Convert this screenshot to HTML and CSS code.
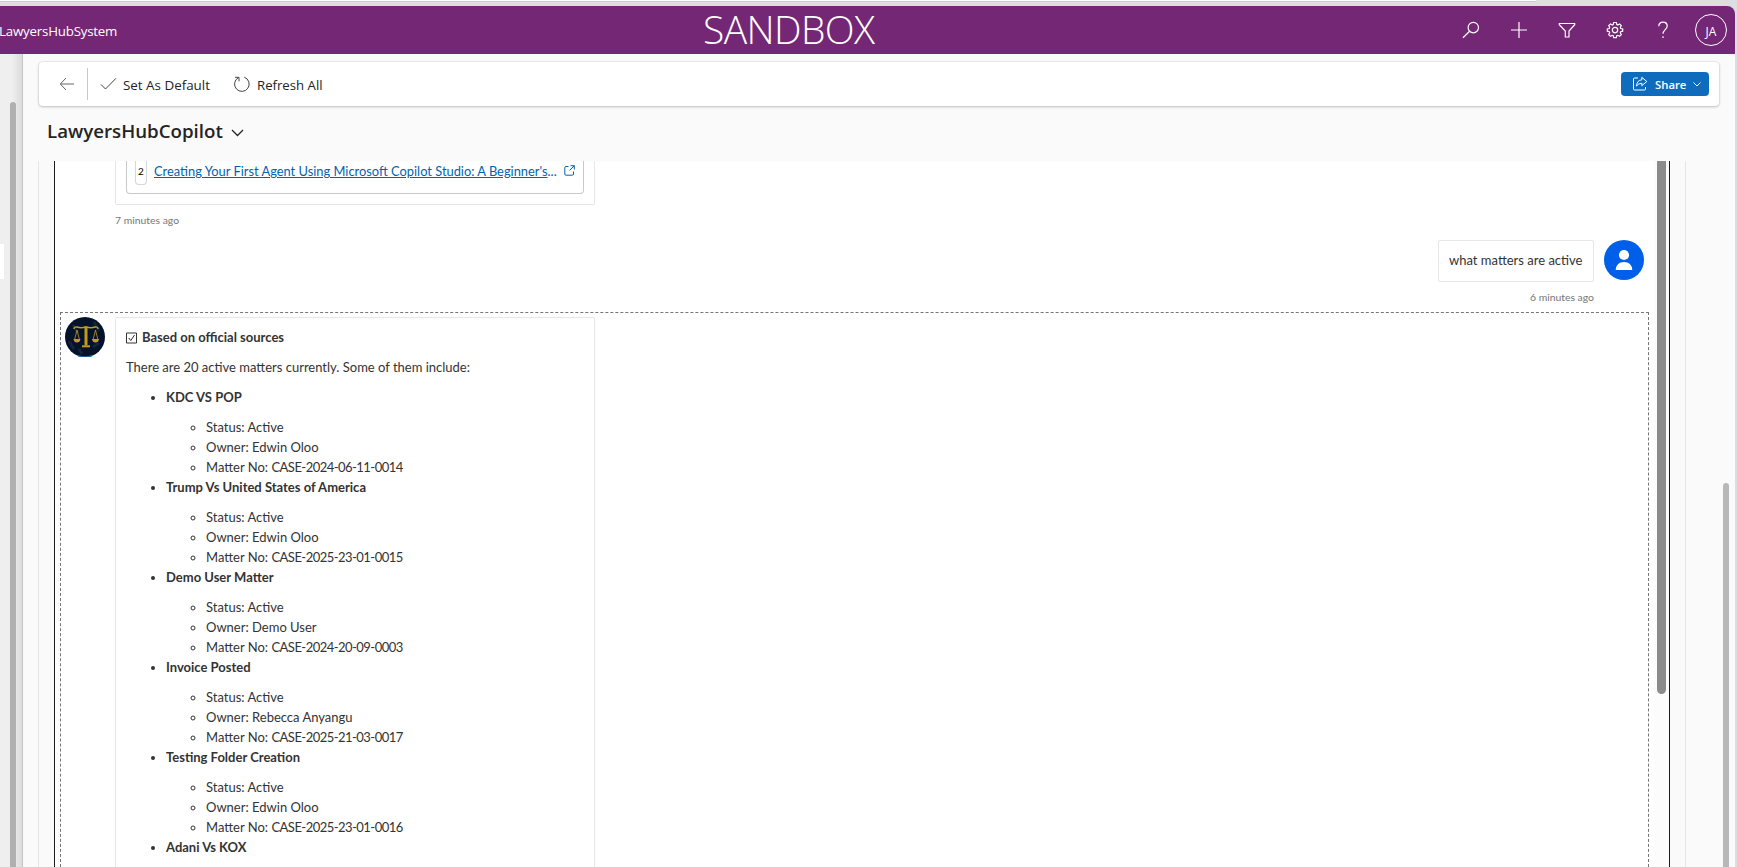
FILE: index.html
```html
<!DOCTYPE html>
<html lang="en">
<head>
<meta charset="utf-8">
<title>LawyersHubCopilot</title>
<link rel="stylesheet" href="styles.css">
</head>
<body>
<div class="window-edge"><div class="tab-edge"></div></div>
<header class="topbar">
  <span class="app-name">LawyersHubSystem</span>
  <span class="env-name">SANDBOX</span>
  <nav class="top-icons">
    <svg width="20" height="20" viewBox="0 0 20 20"><circle cx="12.3" cy="7.6" r="5.200"/><path d="M8.600 11.300 2 17.800"/></svg>
    <svg width="20" height="20" viewBox="0 0 20 20"><path d="M10 2v16M2 10h16"/></svg>
    <svg width="20" height="20" viewBox="0 0 20 20"><path d="M2.300 3.500h15.400v1.200L12 11v6H8.300v-6L2.300 4.700z"/></svg>
    <svg width="20" height="20" viewBox="0 0 20 20"><path d="M8.700 2.500h2.600l.5 2 1 .5 1.800-1.100 1.700 1.700-1 1.900.4 1 2 .5v2.200l-2 .5-.4 1 1 1.900-1.700 1.700-1.800-1-1 .4-.5 2H8.700l-.5-2-1-.4-1.800 1-1.700-1.700 1-1.900-.4-1-2-.5V9l2-.5.4-1-1-1.900 1.700-1.700L7.200 5l1-.5z"/><circle cx="10" cy="10.100" r="2.700"/></svg>
    <svg width="20" height="20" viewBox="0 0 20 20"><path d="M5.800 6.200c0-2.400 1.700-4 4.200-4s4.200 1.500 4.200 3.800c0 3.400-4.200 3.900-4.200 7.800M10 16.300v1.700"/></svg>
    <span class="persona">JA</span>
  </nav>
</header>
<div class="body">
  <aside class="side"><div class="side-thumb"></div><div class="side-item"></div></aside>
  <main class="main">
    <div class="cmdbar">
      <svg class="back" width="16" height="14" viewBox="0 0 16 14"><path d="M15 7H1.500M7 1 1.300 7 7 13"/></svg>
      <i class="divider"></i>
      <svg class="check" width="18" height="14" viewBox="0 0 18 14"><path d="M1 7.500 5.500 12 16 1.300"/></svg>
      <span class="cmd cmd-default">Set As Default</span>
      <svg class="refresh" width="18" height="18" viewBox="0 0 18 18"><path d="M11.300 2.200a7.300 7.300 0 1 1-5.800.4M2 2.300h4v4"/></svg>
      <span class="cmd cmd-refresh">Refresh All</span>
      <button class="share">
        <svg width="16" height="16" viewBox="0 0 16 16"><path d="M6 2H2.500Q1.500 2 1.500 3v10q0 1 1 1h10q1 0 1-1v-2M9.800 1.300l5 4.200-5 4.200V7.300Q6.500 7.200 4.500 10 5 4.200 9.800 3.800z"/></svg>
        <span>Share</span>
        <svg class="share-chev" width="8" height="5" viewBox="0 0 8 5"><path d="M.5.5 4 4 7.500.5"/></svg>
      </button>
    </div>
    <div class="title-row">
      <h1>LawyersHubCopilot</h1>
      <svg width="13" height="8" viewBox="0 0 13 8"><path d="M1 1l5.500 5.500L12 1"/></svg>
    </div>
    <div class="panel">
      <div class="chat">
        <div class="cite-bubble">
          <div class="cite">
            <span class="cite-num">2</span>
            <a class="cite-link"><u>Creating Your First Agent Using Microsoft Copilot Studio: A Beginner's</u>...</a>
            <svg width="11" height="11" viewBox="0 0 11 11"><path d="M4.500 1.500H2Q.8 1.500.8 2.700V9q0 1.200 1.200 1.200h6.300q1.200 0 1.200-1.200V6.500M6.500.7h3.800v3.800M10.300.7 5.500 5.500"/></svg>
          </div>
        </div>
        <div class="time time-bot">7 minutes ago</div>
        <div class="user-row">
          <div class="user-bubble">what matters are active</div>
          <svg class="user-avatar" width="40" height="40" viewBox="0 0 40 40"><circle cx="20" cy="20" r="20" fill="#005fe9"/><circle cx="20" cy="15" r="5.100" fill="#fff"/><path d="M11.700 30q.6-8 8.300-8t8.300 8z" fill="#fff"/></svg>
        </div>
        <div class="time time-user">6 minutes ago</div>
        <section class="answer">
          <svg class="bot-avatar" width="40" height="40" viewBox="0 0 40 40">
            <circle cx="20" cy="20" r="20" fill="#04122a"/>
            <path d="M13 38.600a20 20 0 0 0 14 0" fill="none" stroke="#1b62a8" stroke-width="1.500"/>
            <path d="M8 8l5 8M29 5l5 9M4 24l5 8M28 30l6-4M14 32l3 5" stroke="#13243d" stroke-width="3"/>
            <g fill="none" stroke="#c39a1c">
              <path d="M9 12q0-2.500 3-2 4 1.500 8.500 0h1q4.500 1.500 8.500 0 3-.5 3 2" stroke-width="1.500"/>
              <path d="M21 9.500v19" stroke-width="3"/>
              <path d="M17 29.300h8" stroke-width="2"/>
              <path d="M12 13 9.500 23M12 13l2.500 10M30.500 13 28 23M30.500 13 33 23" stroke-width=".8"/>
            </g>
            <path d="M8.500 22h7q-.5 3.500-3.500 3.500T8.500 22zM27 22h7q-.5 3.500-3.500 3.500T27 22z" fill="#c39a1c"/>
          </svg>
          <div class="answer-bubble">
            <p class="official"><svg width="11" height="12" viewBox="0 0 11 12"><path d="M.5 1h10v10H.5zM2.800 6l2 2.600L8.500 3"/></svg><b>Based on official sources</b></p>
            <p>There are 20 active matters currently. Some of them include:</p>
            <ul>
              <li><b>KDC VS POP</b><ul><li>Status: Active</li><li>Owner: Edwin Oloo</li><li>Matter No: <span class="no">CASE-2024-06-11-0014</span></li></ul></li>
              <li><b>Trump Vs United States of America</b><ul><li>Status: Active</li><li>Owner: Edwin Oloo</li><li>Matter No: <span class="no">CASE-2025-23-01-0015</span></li></ul></li>
              <li><b>Demo User Matter</b><ul><li>Status: Active</li><li>Owner: Demo User</li><li>Matter No: <span class="no">CASE-2024-20-09-0003</span></li></ul></li>
              <li><b>Invoice Posted</b><ul><li>Status: Active</li><li>Owner: Rebecca Anyangu</li><li>Matter No: <span class="no">CASE-2025-21-03-0017</span></li></ul></li>
              <li><b>Testing Folder Creation</b><ul><li>Status: Active</li><li>Owner: Edwin Oloo</li><li>Matter No: <span class="no">CASE-2025-23-01-0016</span></li></ul></li>
              <li><b>Adani Vs KOX</b></li>
            </ul>
          </div>
        </section>
      </div>
      <div class="chat-track"><div class="chat-thumb"></div></div>
    </div>
  </main>
  <div class="page-track"><div class="page-thumb"></div></div>
</div>
</body>
</html>
```
FILE: styles.css
```css
* { box-sizing: border-box; }
body {
  margin: 0; width: 1737px; height: 867px; overflow: hidden;
  display: flex; flex-direction: column; background: #dcdee2;
  font-family: "Open Sans", "Noto Sans", sans-serif; color: #242424;
}
svg { flex: none; fill: none; }
.window-edge { height: 6px; flex: none; background: #dcdee1; }
.tab-edge { width: 1537px; height: 2px; background: #fdfdfd; border-bottom: 1px solid #c9cfca; border-radius: 0 0 4px 0; }
.topbar {
  width: 1735px; height: 48px; flex: none; background: #742774; color: #fff;
  border-top-right-radius: 8px; display: flex; align-items: center;
}
.app-name { width: 118px; font-size: 13.3px; margin-left: -1px; padding-top: 2px; letter-spacing: -.2px; white-space: nowrap; }
.env-name { margin-left: 586px; font-size: 39px; font-weight: 300; line-height: 46px; padding-bottom: 2px; letter-spacing: -.6px; }
.top-icons { margin-left: auto; display: flex; align-items: center; gap: 28px; padding-right: 8px; }
.top-icons svg { stroke: #fff; stroke-width: 1.2; }
.persona {
  width: 32px; height: 32px; margin-left: -6px; border: 1px solid #fff; border-radius: 50%;
  font-size: 12px; font-weight: 500; line-height: 33px; text-align: center;
}
.body { flex: 1; display: flex; min-height: 0; width: 1735px; background: #fafafa; overflow: hidden; }
.side { width: 23px; flex: none; background: linear-gradient(90deg, #efefef 55%, #dcdcdc); border-right: 1px solid #c4c4c4; position: relative; padding: 48px 0 0 10px; }
.side-thumb { width: 6px; height: 100%; border-radius: 3px 3px 0 0; background: #b0b0b0; }
.side-item { position: absolute; left: 0; top: 190px; width: 4px; height: 35px; background: #fff; }
.main { flex: 1; min-width: 0; display: flex; flex-direction: column; padding: 8px 0 0 15px; }
.cmdbar {
  height: 44px; width: 1680px; margin-left: 1px; flex: none; background: #fff; border-radius: 4px;
  box-shadow: 0 0 2px rgba(0,0,0,.16), 0 1px 3px rgba(0,0,0,.2);
  display: flex; align-items: center; padding: 0 10px 0 20px;
}
.cmdbar svg { stroke: #444; }
.cmdbar .back { stroke: #666; }
.divider { width: 1px; height: 32px; margin: 0 12px; background: #c8c8c8; }
.cmd { font-size: 13.4px; margin-left: 5px; padding-top: 2px; white-space: nowrap; }
.cmd-refresh { font-size: 13.2px; margin-left: 6px; }
.refresh { margin-left: 23px; }
.share {
  margin-left: auto; width: 88px; height: 24px; border: 0; border-radius: 4px; background: #0f6cbd; color: #fff;
  display: flex; align-items: center; padding: 0 10px 0 11px; gap: 7px;
  font: 600 11.3px "Open Sans", sans-serif;
}
.cmdbar .share svg { stroke: #fff; }
.title-row { height: 55px; flex: none; display: flex; align-items: center; padding: 0 0 6px 9px; gap: 8px; }
.title-row svg { stroke: #242424; stroke-width: 1.3; margin-top: 5px; }
h1 { margin: 0; font-size: 18.7px; font-weight: 600; line-height: 28px; }
.panel { flex: 1; min-height: 0; width: 1648px; border: solid #e5e5e5; border-width: 0 1px; padding: 0 15px; display: flex; }
.chat {
  flex: 1; background: #fff; border-left: 1px solid #1b1b1b; min-width: 0;
  display: flex; flex-direction: column;
  font-family: Lato, "Open Sans", sans-serif; font-size: 13px; color: #333; padding-left: 5px;
}
.cite-bubble { flex: none; margin-left: 55px; width: 480px; height: 44px; border: 1px solid #e6e6e6; border-top: 0; border-radius: 0 0 2px 2px; padding: 0 10px 10px; }
.cite { height: 33px; border: 1px solid #c9c9c9; border-top: 0; border-radius: 0 0 4px 4px; display: flex; align-items: flex-start; padding-left: 8px; }
.cite-num { width: 12px; height: 24px; border: 1px solid #d6d6d6; border-top: 0; border-radius: 0 0 4px 4px; font-size: 10px; line-height: 21px; text-align: center; color: #000; }
.cite-link { margin-left: 7px; font-size: 12.87px; line-height: 20px; color: #0063b1; white-space: nowrap; }
.cite svg { stroke: #0063b1; margin: 4px 0 0 7px; }
.time { flex: none; font-size: 10.4px; line-height: 14px; color: #767676; }
.time-bot { margin: 8px 0 0 55px; }
.user-row { flex: none; display: flex; justify-content: flex-end; gap: 10px; margin-top: 13px; padding-right: 10px; }
.user-bubble { width: 156px; height: 42px; border: 1px solid #e6e6e6; border-radius: 2px; line-height: 39px; padding-left: 10px; white-space: nowrap; }
.time-user { text-align: right; padding-right: 60px; margin-top: 8px; }
.answer { flex: 1; min-height: 0; margin: 8px 5px 0 0; border: 1px dashed #767676; border-bottom: 0; display: flex; align-items: flex-start; gap: 10px; padding: 4px 4px 0; }
.answer-bubble { width: 480px; height: 100%; border: 1px solid #e6e6e6; border-bottom: 0; border-radius: 2px 2px 0 0; padding: 9px 10px 0; line-height: 20px; }
.answer-bubble p { margin: 0 0 10px; white-space: nowrap; }
.answer-bubble ul { margin: 0; padding-left: 40px; }
.answer-bubble ul ul { padding-top: 10px; }
.no { letter-spacing: -.53px; }
.official svg { stroke: #333; margin-right: 5px; vertical-align: -2px; }
.chat-track { width: 16px; flex: none; background: #fcfcfc; border-right: 1px solid #1b1b1b; padding-left: 3px; }
.chat-thumb { width: 9px; height: 533px; background: #8b8b8b; border-radius: 0 0 5px 5px; }
.page-track { width: 12px; flex: none; padding-top: 429px; }
.page-thumb { width: 6px; height: 100%; border-radius: 3px 3px 0 0; background: #b8b8b8; }
```
